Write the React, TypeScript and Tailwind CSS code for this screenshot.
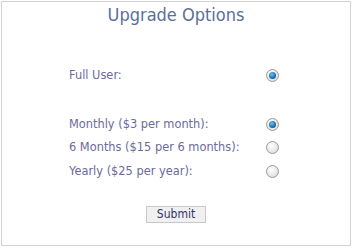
const font = { fontFamily: '"DejaVu Sans", Verdana, sans-serif' };
const narrow = { fontFamily: '"DejaVu Sans Condensed", Tahoma, sans-serif' };

function Radio({ checked }: { checked?: boolean }) {
  return (
    <span className="flex size-[13px] items-center justify-center rounded-full border border-[#9a9a9a] bg-[radial-gradient(circle_at_40%_35%,#ffffff,#d6d6d6)]">
      {checked && (
        <span className="size-[7px] rounded-full bg-[radial-gradient(circle_at_40%_35%,#6fc3f0,#1a6ea8_60%,#0b3f6a)]" />
      )}
    </span>
  );
}

function Row({ label, checked }: { label: string; checked?: boolean }) {
  return (
    <div className="flex h-[23.5px] items-center">
      <span className="w-[197px] text-[11.4px] text-[#6b6b9c]">{label}</span>
      <Radio checked={checked} />
    </div>
  );
}

export default function App() {
  return (
    <div className="h-[248px] w-[352px] bg-white p-px" style={font}>
      <div className="flex h-[245px] w-[350px] flex-col border border-[#d2d2d2]">
        <h1 className="mt-[2px] text-center text-[18px] leading-[22px] text-[#5a7098]" style={narrow}>
          Upgrade Options
        </h1>
        <div className="mt-[38px] flex flex-col pl-[67px]">
          <Row label="Full User:" checked />
          <div className="h-[25px]" />
          <Row label="Monthly ($3 per month):" checked />
          <Row label="6 Months ($15 per 6 months):" />
          <Row label="Yearly ($25 per year):" />
        </div>
        <div className="mt-[23px] flex justify-center">
          <button
            className="h-[17px] w-[60px] border border-[#c8c8c8] bg-[#f0f0f0] text-[12px] leading-[15px] text-[#34346a]"
            style={narrow}
          >
            Submit
          </button>
        </div>
      </div>
    </div>
  );
}
